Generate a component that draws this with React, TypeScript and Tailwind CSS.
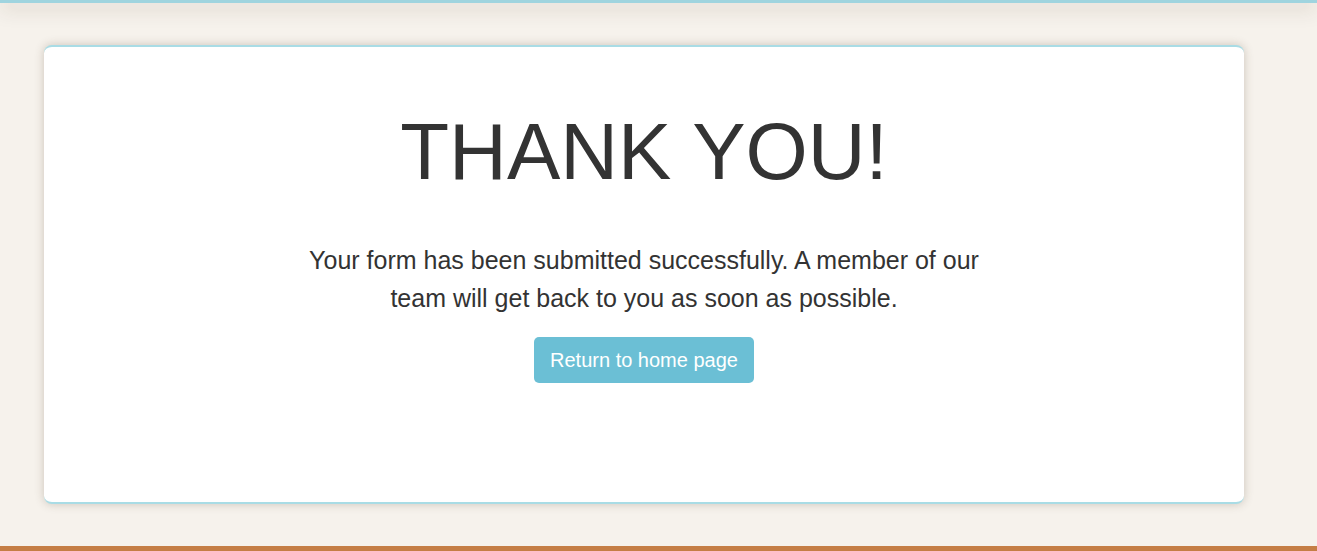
import React from 'react';

const App: React.FC = () => {
  return (
    <div className="min-h-[551px] bg-[#f6f2ec] flex flex-col font-['Liberation_Sans',Arial,sans-serif]">
      <header className="h-[3px] bg-[#9fd4df] shadow-[0_3px_20px_rgba(60,40,20,0.45)] relative z-10" />

      <main className="flex-1 pt-[42px] pb-[42px] pl-[44px]">
        <div className="w-[1200px] h-[459px] bg-white rounded-[8px] border-y-2 border-[#a9dce5] shadow-[0_0_10px_rgba(80,60,40,0.25)] flex flex-col items-center pt-[65px]">
          <h1 className="text-[80px] leading-none text-[#333333] font-normal">THANK YOU!</h1>
          <p className="mt-[49px] w-[700px] text-center text-[25px] leading-[38px] text-[#333333]">
            Your form has been submitted successfully. A member of our team will get back to you as soon as possible.
          </p>
          <button className="mt-[20px] h-[46px] px-[16px] rounded-[5px] bg-[#6bbfd5] text-white text-[20px]">
            Return to home page
          </button>
        </div>
      </main>

      <footer className="h-[5px] bg-[#c57e45]" />
    </div>
  );
};

export default App;
